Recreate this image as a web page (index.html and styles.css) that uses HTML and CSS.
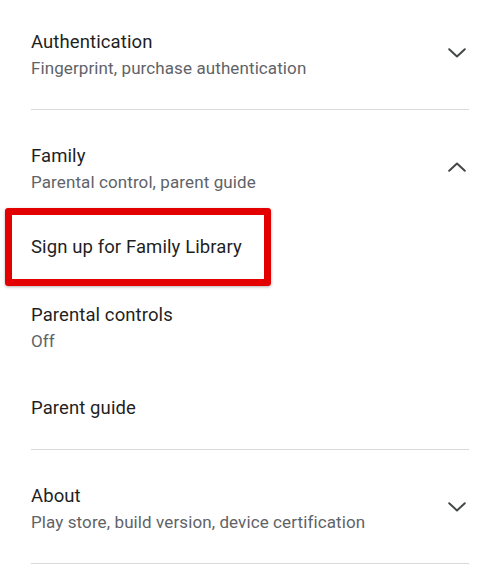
FILE: index.html
```html
<!DOCTYPE html>
<html lang="en">
<head>
<meta charset="utf-8">
<title>Settings</title>
<link rel="stylesheet" href="styles.css">
</head>
<body>
<div class="list">
  <section class="group first">
    <div class="head">
      <div class="text">
        <div class="title">Authentication</div>
        <div class="sub">Fingerprint, purchase authentication</div>
      </div>
      <svg class="chev" width="18" height="10" viewBox="0 0 18 10"><polyline points="1.2,1.2 9,8.4 16.8,1.2" /></svg>
    </div>
  </section>
  <section class="group open">
    <div class="head">
      <div class="text">
        <div class="title">Family</div>
        <div class="sub">Parental control, parent guide</div>
      </div>
      <svg class="chev" width="18" height="10" viewBox="0 0 18 10"><polyline points="1.2,8.8 9,1.6 16.8,8.8" /></svg>
    </div>
    <div class="items">
      <div class="item marked"><div class="title">Sign up for Family Library</div></div>
      <div class="item">
        <div class="title">Parental controls</div>
        <div class="sub">Off</div>
      </div>
      <div class="item"><div class="title">Parent guide</div></div>
    </div>
  </section>
  <section class="group">
    <div class="head">
      <div class="text">
        <div class="title">About</div>
        <div class="sub">Play store, build version, device certification</div>
      </div>
      <svg class="chev" width="18" height="10" viewBox="0 0 18 10"><polyline points="1.2,1.2 9,8.4 16.8,1.2" /></svg>
    </div>
  </section>
</div>
</body>
</html>
```
FILE: styles.css
```css
html, body {
  margin: 0;
  padding: 0;
  background: #ffffff;
}
body {
  font-family: Roboto, "Noto Sans", "Liberation Sans", sans-serif;
  color: #1f1f1f;
}
.list {
  padding: 0 31px;
}
.group {
  padding: 34px 0 30px;
  border-bottom: 1px solid #d9d9d9;
}
.group.first {
  padding-top: 30px;
}
.group.open {
  padding-bottom: 29px;
}
.head {
  display: flex;
  align-items: center;
  justify-content: space-between;
}
.title {
  font-size: 18.5px;
  line-height: 24px;
  letter-spacing: 0.1px;
  color: #1f1f1f;
}
.sub {
  margin-top: 4px;
  font-size: 17px;
  line-height: 21px;
  letter-spacing: 0.1px;
  color: #5f6368;
}
.chev {
  flex: none;
  margin-right: 3px;
  margin-top: -4px;
}
.chev polyline {
  fill: none;
  stroke: #444746;
  stroke-width: 2;
  stroke-linecap: round;
  stroke-linejoin: round;
}
.items {
  display: flex;
  flex-direction: column;
  gap: 44px;
  padding-top: 42px;
}
.item {
  position: relative;
}
.item.marked::after {
  content: "";
  position: absolute;
  left: -26px;
  top: -27px;
  width: 266px;
  height: 78px;
  box-sizing: border-box;
  border: 7px solid #e30000;
  border-radius: 3px;
  box-shadow: 0 1px 3px rgba(0, 0, 0, 0.3);
}
```
